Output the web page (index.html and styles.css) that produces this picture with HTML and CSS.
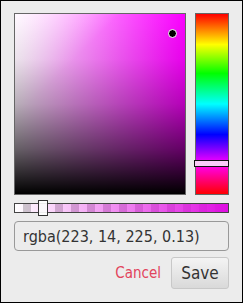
FILE: index.html
```html
<!DOCTYPE html>
<html lang="en">
<head>
    <meta charset="UTF-8">
    <title>Color Picker</title>
    <link rel="stylesheet" href="styles.css">
</head>
<body>
    <div class="picker">
        <div class="picker-top">
            <div class="sat-box">
                <div class="sat-dot"></div>
            </div>
            <div class="hue-bar">
                <div class="hue-handle"></div>
            </div>
        </div>

        <div class="alpha-bar">
            <div class="alpha-fill"></div>
            <div class="alpha-handle"></div>
        </div>

        <input class="color-input" type="text" value="rgba(223, 14, 225, 0.13)">

        <div class="actions">
            <span class="cancel-link">Cancel</span>
            <button class="save-btn">Save</button>
        </div>
    </div>
</body>
</html>
```

FILE: styles.css
```css
/* Base */
body {
    margin: 0;
    font-family: 'DejaVu Sans Condensed', 'DejaVu Sans', sans-serif;
}

.picker {
    width: 243px;
    height: 303px;
    box-sizing: border-box;
    border: 1px solid #000;
    background-color: #ececec;
    padding: 12px 13px;
}

/* Saturation + hue */
.picker-top {
    display: flex;
    gap: 9px;
    height: 182px;
}

.sat-box {
    position: relative;
    width: 172px;
    box-sizing: border-box;
    border: 1px solid #666;
    background:
        linear-gradient(to bottom, rgba(0,0,0,0) 0%, rgba(0,0,0,0.08) 25%, rgba(0,0,0,0.28) 50%, rgba(0,0,0,0.6) 75%, #000 100%),
        linear-gradient(to right, rgba(255,255,255,0.95), rgba(255,255,255,0)),
        linear-gradient(135deg, rgba(255,255,255,0.6), rgba(255,255,255,0) 30%),
        hsl(299, 100%, 50%);
}

.sat-dot {
    position: absolute;
    left: 153px;
    top: 15px;
    width: 7px;
    height: 7px;
    border-radius: 50%;
    background-color: #000;
    border: 1px solid #fff;
}

.hue-bar {
    position: relative;
    width: 34px;
    box-sizing: border-box;
    border: 1px solid #666;
    background: linear-gradient(to bottom, #f00 0%, #ff0 17%, #0f0 33%, #0ff 50%, #00f 67%, #f0f 83%, #f00 100%);
}

.hue-handle {
    position: absolute;
    left: -2px;
    right: -1px;
    top: 146px;
    height: 5px;
    background-color: #fbcaf8;
    border: 1px solid #111;
}

/* Alpha */
.alpha-bar {
    position: relative;
    margin-top: 8px;
    height: 10px;
    box-sizing: border-box;
    border: 1px solid #444;
    background-color: #fff;
    background-image:
        linear-gradient(45deg, #ccc 25%, transparent 25%, transparent 75%, #ccc 75%),
        linear-gradient(45deg, #ccc 25%, transparent 25%, transparent 75%, #ccc 75%);
    background-size: 16px 16px;
    background-position: 0 0, 8px 8px;
}

.alpha-fill {
    height: 100%;
    background: linear-gradient(to right, rgba(223,14,225,0), rgb(223,14,225));
}

.alpha-handle {
    position: absolute;
    left: 23px;
    top: -4px;
    width: 8px;
    height: 14px;
    background-color: rgba(255,255,255,0.9);
    border: 1px solid #333;
}

/* Input */
.color-input {
    display: block;
    width: 100%;
    height: 30px;
    box-sizing: border-box;
    margin-top: 8px;
    padding: 0 8px;
    border: 1px solid #999;
    border-radius: 4px;
    background-color: #ececec;
    font-family: inherit;
    font-size: 16px;
    color: #333;
}

/* Actions */
.actions {
    display: flex;
    justify-content: flex-end;
    align-items: center;
    gap: 10px;
    margin-top: 6px;
}

.cancel-link {
    color: #e2445c;
    font-size: 15px;
    cursor: pointer;
}

.save-btn {
    width: 58px;
    height: 32px;
    border: 1px solid #c8c8c8;
    border-radius: 3px;
    background: linear-gradient(to bottom, #f4f4f4, #d9d9d9);
    font-family: inherit;
    font-size: 17px;
    color: #333;
    cursor: pointer;
}
```
